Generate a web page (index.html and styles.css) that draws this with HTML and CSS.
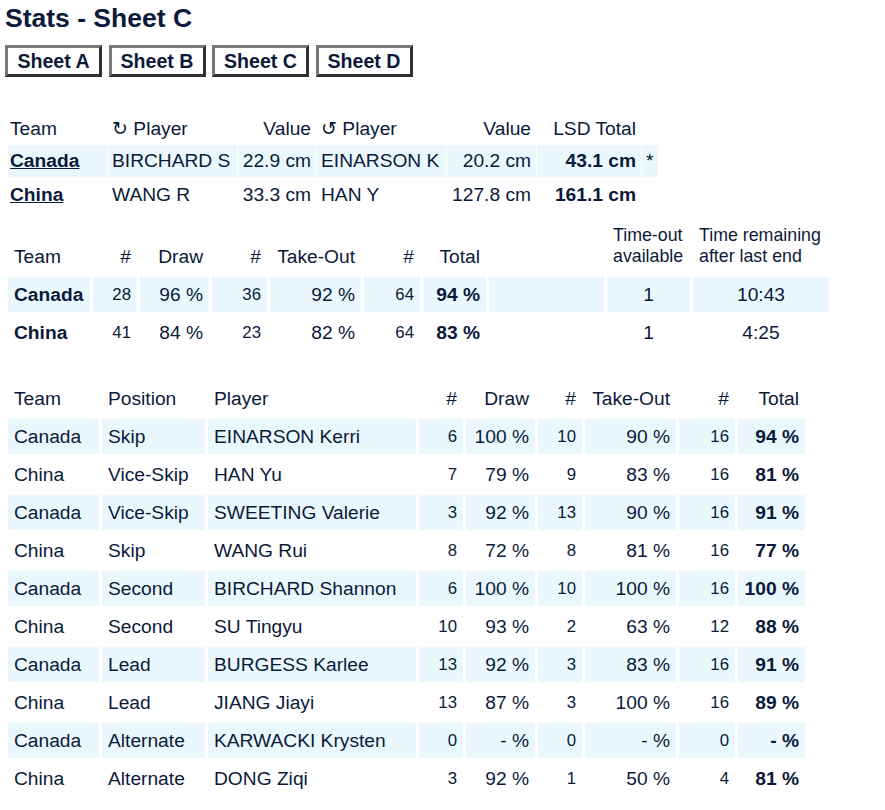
FILE: index.html
```html
<!DOCTYPE html>
<html>
<head>
<meta charset="utf-8">
<title>Stats - Sheet C</title>
<link rel="stylesheet" href="styles.css">
</head>
<body>
<h1 class="title">Stats - Sheet C</h1>
<div class="sheets">
  <button class="sheet">Sheet A</button>
  <button class="sheet">Sheet B</button>
  <button class="sheet">Sheet C</button>
  <button class="sheet">Sheet D</button>
</div>

<table class="lsd">
  <tr>
    <th class="l w-team">Team</th>
    <th class="l w-player">↻ Player</th>
    <th class="r w-val">Value</th>
    <th class="l w-player">↺ Player</th>
    <th class="r w-val2">Value</th>
    <th class="r w-lsd">LSD Total</th>
    <th class="w-star"></th>
  </tr>
  <tr class="odd">
    <td class="l w-team"><a class="team-link" href="#">Canada</a></td>
    <td class="l">BIRCHARD S</td>
    <td class="r">22.9 cm</td>
    <td class="l">EINARSON K</td>
    <td class="r">20.2 cm</td>
    <td class="r b">43.1 cm</td>
    <td class="star">*</td>
  </tr>
  <tr>
    <td class="l w-team"><a class="team-link" href="#">China</a></td>
    <td class="l">WANG R</td>
    <td class="r">33.3 cm</td>
    <td class="l">HAN Y</td>
    <td class="r">127.8 cm</td>
    <td class="r b">161.1 cm</td>
    <td class="blank"></td>
  </tr>
</table>

<table class="teams">
  <tr>
    <th class="l t-team">Team</th>
    <th class="r t-n1">#</th>
    <th class="r t-draw">Draw</th>
    <th class="r t-n2">#</th>
    <th class="r t-to">Take-Out</th>
    <th class="r t-n3">#</th>
    <th class="r t-tot">Total</th>
    <th class="t-empty"></th>
    <th class="l t-tout small-h">Time-out<br>available</th>
    <th class="l t-trem small-h">Time remaining<br>after last end</th>
  </tr>
  <tr class="odd">
    <td class="l b">Canada</td>
    <td class="r n">28</td>
    <td class="r">96 %</td>
    <td class="r n">36</td>
    <td class="r">92 %</td>
    <td class="r n">64</td>
    <td class="r b">94 %</td>
    <td></td>
    <td class="c">1</td>
    <td class="c">10:43</td>
  </tr>
  <tr>
    <td class="l b">China</td>
    <td class="r n">41</td>
    <td class="r">84 %</td>
    <td class="r n">23</td>
    <td class="r">82 %</td>
    <td class="r n">64</td>
    <td class="r b">83 %</td>
    <td></td>
    <td class="c">1</td>
    <td class="c">4:25</td>
  </tr>
</table>

<table class="players">
  <tr>
    <th class="l p-team">Team</th>
    <th class="l p-pos">Position</th>
    <th class="l p-player">Player</th>
    <th class="r p-n1">#</th>
    <th class="r p-draw">Draw</th>
    <th class="r p-n2">#</th>
    <th class="r p-to">Take-Out</th>
    <th class="r p-n3">#</th>
    <th class="r p-tot">Total</th>
  </tr>
  <tr class="odd">
    <td class="l">Canada</td><td class="l">Skip</td><td class="l">EINARSON Kerri</td>
    <td class="r n">6</td><td class="r">100 %</td><td class="r n">10</td><td class="r">90 %</td><td class="r n">16</td><td class="r b">94 %</td>
  </tr>
  <tr>
    <td class="l">China</td><td class="l">Vice-Skip</td><td class="l">HAN Yu</td>
    <td class="r n">7</td><td class="r">79 %</td><td class="r n">9</td><td class="r">83 %</td><td class="r n">16</td><td class="r b">81 %</td>
  </tr>
  <tr class="odd">
    <td class="l">Canada</td><td class="l">Vice-Skip</td><td class="l">SWEETING Valerie</td>
    <td class="r n">3</td><td class="r">92 %</td><td class="r n">13</td><td class="r">90 %</td><td class="r n">16</td><td class="r b">91 %</td>
  </tr>
  <tr>
    <td class="l">China</td><td class="l">Skip</td><td class="l">WANG Rui</td>
    <td class="r n">8</td><td class="r">72 %</td><td class="r n">8</td><td class="r">81 %</td><td class="r n">16</td><td class="r b">77 %</td>
  </tr>
  <tr class="odd">
    <td class="l">Canada</td><td class="l">Second</td><td class="l">BIRCHARD Shannon</td>
    <td class="r n">6</td><td class="r">100 %</td><td class="r n">10</td><td class="r">100 %</td><td class="r n">16</td><td class="r b">100 %</td>
  </tr>
  <tr>
    <td class="l">China</td><td class="l">Second</td><td class="l">SU Tingyu</td>
    <td class="r n">10</td><td class="r">93 %</td><td class="r n">2</td><td class="r">63 %</td><td class="r n">12</td><td class="r b">88 %</td>
  </tr>
  <tr class="odd">
    <td class="l">Canada</td><td class="l">Lead</td><td class="l">BURGESS Karlee</td>
    <td class="r n">13</td><td class="r">92 %</td><td class="r n">3</td><td class="r">83 %</td><td class="r n">16</td><td class="r b">91 %</td>
  </tr>
  <tr>
    <td class="l">China</td><td class="l">Lead</td><td class="l">JIANG Jiayi</td>
    <td class="r n">13</td><td class="r">87 %</td><td class="r n">3</td><td class="r">100 %</td><td class="r n">16</td><td class="r b">89 %</td>
  </tr>
  <tr class="odd">
    <td class="l">Canada</td><td class="l">Alternate</td><td class="l">KARWACKI Krysten</td>
    <td class="r n">0</td><td class="r">- %</td><td class="r n">0</td><td class="r">- %</td><td class="r n">0</td><td class="r b">- %</td>
  </tr>
  <tr>
    <td class="l">China</td><td class="l">Alternate</td><td class="l">DONG Ziqi</td>
    <td class="r n">3</td><td class="r">92 %</td><td class="r n">1</td><td class="r">50 %</td><td class="r n">4</td><td class="r b">81 %</td>
  </tr>
</table>
</body>
</html>
```

FILE: styles.css
```css
html, body {
  background: #ffffff;
}
body {
  margin: 3px 5px 0 5px;
  font-family: "Liberation Sans", Arial, sans-serif;
  font-size: 19.2px;
  color: #0b1a3a;
}

.title {
  margin: 0;
  font-size: 26.5px;
  line-height: 30px;
  font-weight: bold;
}

.sheets {
  display: flex;
  gap: 6.5px;
  margin-top: 12px;
}
.sheet {
  box-sizing: border-box;
  width: 97px;
  height: 32px;
  padding: 0;
  margin: 0;
  background: #ffffff;
  border: 3px solid;
  border-color: #787878 #303030 #303030 #787878;
  font-family: "Liberation Sans", Arial, sans-serif;
  font-size: 19.6px;
  font-weight: bold;
  line-height: 24px;
  color: #0b1a3a;
  cursor: pointer;
}

table {
  border-collapse: separate;
  font-size: 19.2px;
}
th {
  font-weight: normal;
}
th, td {
  line-height: 22px;
  vertical-align: middle;
  white-space: nowrap;
}
.l { text-align: left; }
.r { text-align: right; }
.c { text-align: center; }
.b { font-weight: bold; }
.n { font-size: 16.8px; }

.odd td { background: #eaf8fd; }
.odd td.blank { background: transparent; }

/* LSD table */
.lsd {
  margin-top: 35px;
  margin-left: 2px;
  border-spacing: 1px 2px;
}
.lsd th {
  padding: 3.5px 5px 3.5px 4px;
}
.lsd td {
  padding: 5px 5px 5px 4px;
}
.lsd .w-team { width: 92px; padding-left: 2px; }
.lsd .w-player { width: 120px; }
.lsd .w-val { width: 69px; }
.lsd .w-val2 { width: 80px; }
.lsd .w-lsd { width: 95px; }
.lsd .w-star { width: 8px; padding: 3.5px 4px; }
.lsd td.star { padding: 5px 4px; text-align: left; }
.team-link {
  color: #0b1a3a;
  font-weight: bold;
  text-decoration: underline;
}

/* team table */
.teams {
  margin-top: 2px;
  border-spacing: 3px;
}
.teams th {
  padding: 6.5px 6px 7.5px 6px;
  line-height: 21px;
  vertical-align: bottom;
}
.teams td {
  padding: 6.5px 6px;
}
.teams .small-h { font-size: 17.8px; }
.teams .t-team { width: 70px; }
.teams .t-n1 { width: 32px; }
.teams .t-draw { width: 57px; }
.teams .t-n2 { width: 43px; }
.teams .t-to { width: 79px; }
.teams .t-n3 { width: 44px; }
.teams .t-tot { width: 51px; }
.teams .t-empty { width: 103px; }
.teams .t-tout { width: 71px; }
.teams .t-trem { width: 124px; }

/* player table */
.players {
  margin-top: 25px;
  border-spacing: 3px;
}
.players th, .players td {
  padding: 6.5px 6px;
}
.players .p-team { width: 79px; }
.players .p-pos { width: 91px; }
.players .p-player { width: 196px; }
.players .p-n1 { width: 32px; }
.players .p-draw { width: 57px; }
.players .p-n2 { width: 32px; }
.players .p-to { width: 79px; }
.players .p-n3 { width: 44px; }
.players .p-tot { width: 55px; }
```
